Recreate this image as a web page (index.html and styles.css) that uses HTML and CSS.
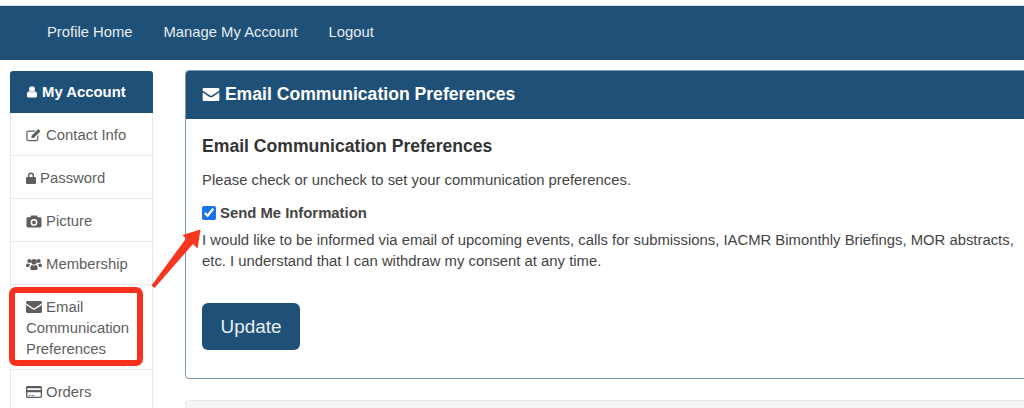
FILE: index.html
```html
<!DOCTYPE html>
<html lang="en">
<head>
    <meta charset="UTF-8">
    <meta name="viewport" content="width=device-width, initial-scale=1.0">
    <title>Email Communication Preferences</title>
    <link rel="stylesheet" href="styles.css">
</head>
<body>
    <nav class="topnav">
        <a href="#">Profile Home</a>
        <a href="#">Manage My Account</a>
        <a href="#">Logout</a>
    </nav>

    <div class="page">
        <aside class="side">
            <div class="side-head">
                <svg class="icon" viewBox="0 0 14 14"><circle cx="7" cy="3.6" r="3.4"/><path d="M1 11c0-3 1-4.800 2.800-4.800C4.700 7 5.800 7.500 7 7.500s2.300-.5 3.200-1.300C12 6.200 13 8 13 11c0 1.700-1 2.500-2.400 2.500H3.400C2 13.500 1 12.700 1 11z"/></svg>
                My Account
            </div>
            <a class="side-item" href="#">
                <svg class="icon" viewBox="0 0 16 14"><path d="M2.500 2.500h7l-1.200 1.200H2.500c-.5 0-.9.400-.9.900v6.400c0 .5.400.9.900.9h7.800c.5 0 .9-.4.9-.9V8.200l1.200-1.200V11c0 1.300-1 2.200-2.200 2.200H2.600C1.300 13.200.4 12.300.4 11V4.700c0-1.200.9-2.200 2.100-2.200z"/><path d="M5.500 7.800 12.300 1l2.300 2.300-6.800 6.800H5.500z"/></svg>
                Contact Info
            </a>
            <a class="side-item" href="#">
                <svg class="icon lock" viewBox="0 0 10 12"><path d="M2 5V3.500a3 3 0 0 1 6 0V5h1a1 1 0 0 1 1 1v5a1 1 0 0 1-1 1H1a1 1 0 0 1-1-1V6a1 1 0 0 1 1-1zm1.400 0h3.200V3.500a1.600 1.600 0 0 0-3.200 0z"/></svg>
                Password
            </a>
            <a class="side-item" href="#">
                <svg class="icon" viewBox="0 0 16 14"><path fill-rule="evenodd" d="M5.200 1.500h5.600l1 1.800h2.300c.8 0 1.400.6 1.400 1.400v7.400c0 .8-.6 1.400-1.400 1.400H1.900c-.8 0-1.400-.6-1.400-1.400V4.700c0-.8.600-1.400 1.400-1.400h2.300zM8 5a3.400 3.400 0 1 0 0 6.800A3.400 3.400 0 0 0 8 5zm0 1.500a1.900 1.900 0 1 1 0 3.800 1.900 1.900 0 0 1 0-3.800z"/></svg>
                Picture
            </a>
            <a class="side-item" href="#">
                <svg class="icon" viewBox="0 0 16 14"><circle cx="3.400" cy="4" r="2.100"/><circle cx="12.600" cy="4" r="2.100"/><circle cx="8" cy="4.800" r="2.800"/><path d="M0 9c0-1.600.7-2.600 1.700-2.600.7.600 1.400.8 2.300.7-.5.8-.8 1.700-.8 2.900H1.200C.5 10 0 9.700 0 9zm16 0c0-1.600-.7-2.600-1.700-2.600-.7.600-1.400.8-2.300.7.500.8.800 1.700.8 2.900h2c.7 0 1.200-.3 1.200-1zM4.300 11.200c0-2 .8-3.300 2-3.300.5.500 1 .7 1.700.7s1.200-.2 1.700-.7c1.200 0 2 1.300 2 3.300 0 1-.6 1.800-1.700 1.800H6c-1.100 0-1.700-.8-1.700-1.800z"/></svg>
                Membership
            </a>
            <a class="side-item" href="#">
                <svg class="icon" viewBox="0 0 16 14"><use href="#mail"/></svg>
                Email Communication Preferences
            </a>
            <a class="side-item" href="#">
                <svg class="icon" viewBox="0 0 16 14"><path fill-rule="evenodd" d="M1.500 1h13c.8 0 1.500.7 1.500 1.500v9c0 .8-.7 1.500-1.500 1.500h-13C.7 13 0 12.300 0 11.500v-9C0 1.700.7 1 1.500 1zm-.2 2.300v1.600h13.400V3.300zm0 4v4.200c0 .1.100.2.200.2h13c.1 0 .2-.1.200-.2V7.300zM2.500 10h2v.8h-2zm3 0h3v.8h-3z"/></svg>
                Orders
            </a>
        </aside>

        <main class="main">
            <section class="panel">
                <h2 class="panel-head">
                    <svg class="icon" viewBox="0 0 16 14"><symbol id="mail" viewBox="0 0 16 14"><path d="M1.400 1h13.200c.8 0 1.400.6 1.400 1.400 0 .5-.3 1-.7 1.300L8.800 8c-.5.3-1.100.3-1.600 0L.7 3.700C.3 3.400 0 2.900 0 2.400 0 1.600.6 1 1.400 1z"/><path d="M0 4.900v6.700c0 .8.6 1.400 1.400 1.400h13.200c.8 0 1.400-.6 1.400-1.400V4.900L9.400 9.300c-.9.600-1.900.6-2.800 0z"/></symbol><use href="#mail"/></svg>
                    Email Communication Preferences
                </h2>
                <div class="panel-body">
                    <h3>Email Communication Preferences</h3>
                    <p class="intro">Please check or uncheck to set your communication preferences.</p>
                    <label class="check">
                        <input type="checkbox" checked>
                        Send Me Information
                    </label>
                    <p class="consent">I would like to be informed via email of upcoming events, calls for submissions, IACMR Bimonthly Briefings, MOR abstracts, etc. I understand that I can withdraw my consent at any time.</p>
                    <button class="update">Update</button>
                </div>
            </section>
            <section class="panel-next"></section>
        </main>
    </div>

    <!-- annotation drawn over the screenshot -->
    <div class="mark-box"></div>
    <svg class="mark-arrow" viewBox="0 0 1024 408"><path d="M151.500 285.500 186 238.500 182.500 235 200.500 229.500 197.500 248.500 193 244 154.500 288z"/></svg>
</body>
</html>
```

FILE: styles.css
```css
* {
    margin: 0;
    padding: 0;
    box-sizing: border-box;
}

html, body {
    height: 408px;
    overflow: hidden;
}

body {
    font-family: "Liberation Sans", Arial, sans-serif;
    font-size: 14.85px;
    color: #555;
    background-color: white;
    padding-top: 5px;
}

a {
    color: inherit;
    text-decoration: none;
}

.topnav {
    display: flex;
    gap: 31px;
    height: 55px;
    padding: 0 47px 2px;
    align-items: center;
    background-color: #1f5077;
    color: #e6ecf1;
    border-top: 1px solid #d5dee6;
    font-size: 14.8px;
}

.page {
    display: flex;
    align-items: flex-start;
    gap: 32px;
    padding: 10px 0 0 10px;
}

.icon {
    width: 16px;
    height: 14px;
    fill: currentColor;
    vertical-align: -2px;
}

.icon.lock {
    width: 10px;
    height: 12px;
    vertical-align: -1px;
}

.side {
    width: 143px;
    flex-shrink: 0;
    margin-top: 1px;
}

.side-head {
    height: 42px;
    line-height: 42px;
    padding-left: 16px;
    background-color: #1f5077;
    color: white;
    font-weight: bold;
    border-radius: 3px 3px 0 0;
}

.side-head .icon {
    width: 12px;
}

.side-item {
    display: block;
    padding: 12px 15px 9px 15px;
    line-height: 21px;
    color: #5e5e5e;
    border: 1px solid #e8e8e8;
    border-top: none;
}

.main {
    flex: 1;
    margin-right: -20px;
}

.panel {
    height: 309px;
    border: 1px solid #7b9ab3;
    border-radius: 4px;
}

.panel-head {
    height: 48px;
    line-height: 46px;
    padding-left: 16px;
    font-size: 17.6px;
    color: white;
    background-color: #1f5077;
    border-radius: 3px 3px 0 0;
}

.panel-head .icon {
    width: 18px;
    height: 15px;
}

.panel-body {
    padding: 17px 28px 0 16px;
}

h3 {
    font-size: 17.6px;
    line-height: 21px;
    color: #333;
    margin-bottom: 13px;
}

.intro {
    line-height: 20px;
    color: #444;
    margin-bottom: 13px;
}

.check {
    display: flex;
    align-items: center;
    gap: 4px;
    font-weight: bold;
    color: #444;
    line-height: 20px;
    margin-bottom: 7px;
}

.check input {
    width: 14px;
    height: 14px;
    margin: 0;
    accent-color: #1a73e8;
}

.consent {
    line-height: 21px;
    color: #444;
    margin-bottom: 31px;
}

.update {
    width: 98px;
    height: 47px;
    border: none;
    border-radius: 6px;
    background-color: #1f5077;
    color: #e9eef2;
    font-family: inherit;
    font-size: 18.9px;
}

.panel-next {
    height: 30px;
    margin-top: 21px;
    background-color: #f5f5f5;
    border: 1px solid #e8e8e8;
    border-radius: 4px;
}

.mark-box {
    position: absolute;
    left: 9px;
    top: 287px;
    width: 134px;
    height: 79px;
    border: 6px solid #f7301c;
    border-radius: 7px;
}

.mark-arrow {
    position: absolute;
    left: 0;
    top: 0;
    width: 1024px;
    height: 408px;
    fill: #f7361f;
}
```
